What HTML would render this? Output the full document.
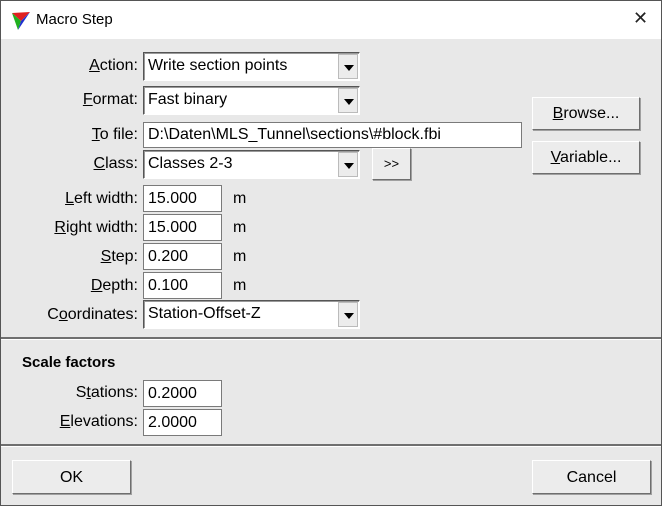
<!DOCTYPE html>
<html><head><style>
*{box-sizing:border-box;margin:0;padding:0}
body{width:662px;height:506px;overflow:hidden;background:#e8e8e8;font-family:"Liberation Sans",sans-serif;font-size:16px;color:#000;position:relative}
.win{position:absolute;left:0;top:0;width:662px;height:506px;border:1px solid #555;background:#e8e8e8}
.title{position:absolute;left:0;top:0;width:660px;height:38px;background:#fff}
.title span{position:absolute;left:35px;top:10px;font-size:15px}
.x{position:absolute;left:632px;top:7px;font-size:18px;font-weight:300;color:#222}
.a{position:absolute}
.lbl{position:absolute;text-align:right;width:137px;left:0}
.in{position:absolute;background:#fff;border:1px solid #7a7a7a;padding:3px 0 0 4px;white-space:nowrap;overflow:hidden}
.dd{position:absolute;background:#fff;border:1px solid;border-color:#555 #fff #fff #555;box-shadow:inset 1px 1px #999;padding:4px 0 0 4px;white-space:nowrap}
.dd .arr{position:absolute;right:1px;top:1px;width:20px;bottom:1px;background:#ececec;border:1px solid #bbb}
.dd .arr:after{content:"";position:absolute;left:5px;top:10px;border:5px solid transparent;border-top:6px solid #000;border-bottom:0}
.btn{position:absolute;background:#ececec;border:1px solid;border-color:#fff #6e6e6e #6e6e6e #fff;box-shadow:1px 1px 0 #a0a0a0;text-align:center}
.sep{position:absolute;left:0;width:660px;height:3px;border-top:2px solid #6f6f6f;border-bottom:1px solid #fff}
u{text-decoration:underline}
</style></head><body><div class="win">
<div class="title">
<svg class="a" style="left:10px;top:10px" width="20" height="20" viewBox="0 0 20 20"><polygon points="1,2 19,1 10,10" fill="#e02020"/><polygon points="1,2 10,10 7,19" fill="#20b020"/><polygon points="19,1 10,10 7,19" fill="#2030d0"/></svg>
<span>Macro Step</span><div class="x">✕</div></div>

<div class="lbl" style="top:56px"><u>A</u>ction:</div>
<div class="dd" style="left:142px;top:51px;width:217px;height:29px">Write section points<div class="arr"></div></div>
<div class="lbl" style="top:90px"><u>F</u>ormat:</div>
<div class="dd" style="left:142px;top:85px;width:217px;height:29px">Fast binary<div class="arr"></div></div>
<div class="lbl" style="top:125px"><u>T</u>o file:</div>
<div class="in" style="left:142px;top:121px;width:379px;height:26px">D:\Daten\MLS_Tunnel\sections\#block.fbi</div>
<div class="lbl" style="top:154px"><u>C</u>lass:</div>
<div class="dd" style="left:142px;top:149px;width:217px;height:29px">Classes 2-3<div class="arr"></div></div>
<div class="btn" style="left:371px;top:147px;width:39px;height:32px;padding-top:7px;font-size:13px">&gt;&gt;</div>
<div class="btn" style="left:531px;top:96px;width:108px;height:33px;padding-top:7px"><u>B</u>rowse...</div>
<div class="btn" style="left:531px;top:140px;width:108px;height:33px;padding-top:7px"><u>V</u>ariable...</div>

<div class="lbl" style="top:189px"><u>L</u>eft width:</div>
<div class="in" style="left:142px;top:184px;width:79px;height:27px;padding-top:4px">15.000</div><div class="a" style="left:232px;top:189px">m</div>
<div class="lbl" style="top:218px"><u>R</u>ight width:</div>
<div class="in" style="left:142px;top:213px;width:79px;height:27px;padding-top:4px">15.000</div><div class="a" style="left:232px;top:218px">m</div>
<div class="lbl" style="top:247px"><u>S</u>tep:</div>
<div class="in" style="left:142px;top:242px;width:79px;height:27px;padding-top:4px">0.200</div><div class="a" style="left:232px;top:247px">m</div>
<div class="lbl" style="top:276px"><u>D</u>epth:</div>
<div class="in" style="left:142px;top:271px;width:79px;height:27px;padding-top:4px">0.100</div><div class="a" style="left:232px;top:276px">m</div>
<div class="lbl" style="top:305px">C<u>o</u>ordinates:</div>
<div class="dd" style="left:142px;top:299px;width:217px;height:29px">Station-Offset-Z<div class="arr"></div></div>

<div class="sep" style="top:336px"></div>
<div class="a" style="left:21px;top:353px;font-weight:bold;font-size:15px">Scale factors</div>
<div class="lbl" style="top:383px">S<u>t</u>ations:</div>
<div class="in" style="left:142px;top:379px;width:79px;height:27px;padding-top:4px">0.2000</div>
<div class="lbl" style="top:412px"><u>E</u>levations:</div>
<div class="in" style="left:142px;top:408px;width:79px;height:27px;padding-top:4px">2.0000</div>
<div class="sep" style="top:443px"></div>
<div class="btn" style="left:11px;top:459px;width:119px;height:34px;padding-top:8px">OK</div>
<div class="btn" style="left:531px;top:459px;width:119px;height:34px;padding-top:8px">Cancel</div>
</div></body></html>
